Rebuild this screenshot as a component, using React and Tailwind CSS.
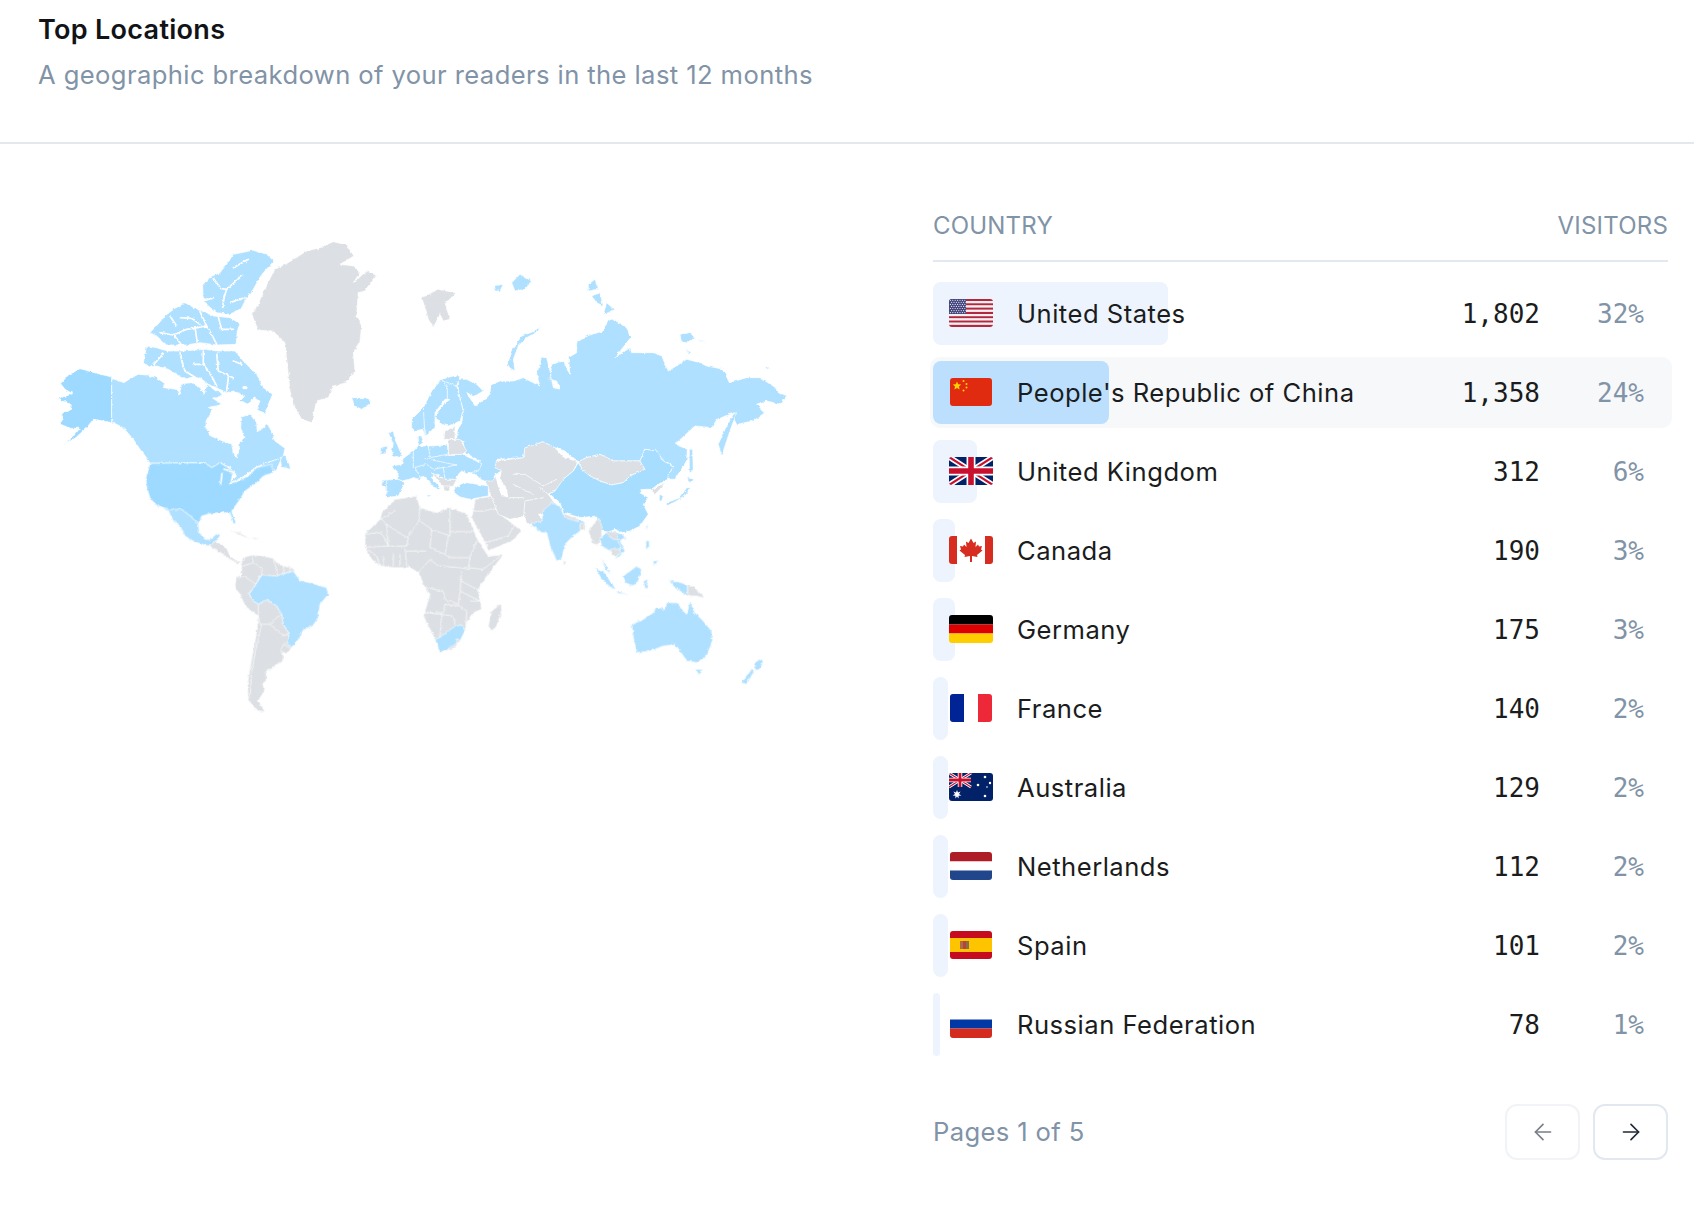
import React from "react";
import { ArrowLeft, ArrowRight } from "lucide-react";

const LIGHT = "#b0e0ff";
const MID = "#a7deff";
const DARK = "#9edaff";
const GRAY = "#dcdfe3";

function Z({ x, y, children }) {
  return <g transform={`translate(${x} ${y}) scale(0.3333)`}>{children}</g>;
}
function P({ f, pts }) {
  return pts.map((p, i) => (
    <polygon key={i} points={p} fill={f} stroke="#fff" strokeWidth="2" strokeLinejoin="round" />
  ));
}
function L({ d, w = 2.2 }) {
  return <path d={d} fill="none" stroke="#fff" strokeWidth={w} strokeLinejoin="round" strokeLinecap="round" />;
}

function WorldMap() {
  return (
    <svg viewBox="50 230 750 490" className="w-[750px] h-[490px] ml-[50px] mt-[87px] block">
      <defs>
        <filter id="coast" x="-2%" y="-2%" width="104%" height="104%">
          <feTurbulence type="fractalNoise" baseFrequency="0.28" numOctaves="2" seed="4" result="n" />
          <feDisplacementMap in="SourceGraphic" in2="n" scale="3" xChannelSelector="R" yChannelSelector="G" />
        </filter>
      </defs>
      <g filter="url(#coast)">
        {/* North America, Greenland, Iceland */}
        <Z x={0} y={200}>
          <P f={GRAY} pts={["1000,122 1040,132 1062,165 1020,190 1060,195 1080,215 1060,245 1100,210 1128,222 1095,270 1075,275 1070,345 1085,375 1080,420 1060,455 1065,510 1040,545 1000,555 985,590 950,600 935,665 905,655 885,620 870,570 862,490 855,425 820,390 775,388 755,340 775,310 790,270 825,205 865,185 920,150 960,140"]} />
          <P f={DARK} pts={["335,528 290,517 240,503 205,522 182,548 195,565 218,578 198,585 172,593 195,603 215,612 210,628 185,640 186,660 178,668 210,682 240,682 215,712 190,732 225,712 260,680 280,655 300,658 335,665"]} />
          <P f={LIGHT} pts={[
            "335,532 372,545 395,530 415,520 440,522 470,530 495,548 490,560 530,565 538,582 545,548 575,545 600,560 612,578 622,550 650,572 665,572 660,590 636,590 665,610 625,620 638,625 618,660 618,680 632,705 680,725 695,728 700,760 712,770 718,740 718,725 732,710 722,680 725,648 750,640 770,665 772,695 800,672 806,672 825,720 855,742 850,765 835,775 800,785 765,800 740,820 700,850 690,845 710,825 700,815 690,800 660,785 635,800 615,785 450,787 440,770 420,745 400,715 370,680 340,665 335,665",
            "840,770 855,762 868,790 872,805 845,798",
            "745,825 790,790 845,770 835,795 815,815 790,825 760,830",
            "608,255 630,228 660,215 680,190 700,160 760,148 800,160 822,180 790,215 778,232 760,265 740,290 725,320 690,340 650,335 625,315 610,295",
            "450,395 478,365 495,345 525,322 555,305 590,325 620,335 640,345 690,350 720,368 712,390 708,430 650,432 600,425 560,432 500,432 470,405",
            "430,485 440,435 470,440 500,450 550,450 615,445 650,450 705,450 730,480 770,520 790,560 818,580 805,610 795,640 770,625 780,600 760,590 745,610 720,600 735,585 700,570 680,575 650,560 625,550 600,530 575,530 545,530 505,505 470,495 445,498",
            "1055,590 1095,590 1112,595 1110,608 1085,625 1065,615",
          ]} />
          <L w={5} d="M640,232 L662,262 L680,265 L725,225 M680,265 L672,290 L668,320 M612,300 L640,290 M690,305 L735,290 M700,200 L745,175" />
          <L w={5} d="M480,395 L520,402 L560,385 L620,375 M540,350 L575,352 L600,370 M600,332 L620,375 L635,400 L650,430 M655,348 L665,385 L700,385 M520,400 L545,432 M585,378 L592,425 M510,345 L530,375" />
          <L w={5} d="M462,490 L490,458 M540,455 L548,490 L555,510 L590,532 M610,450 L610,490 L632,520 L650,555 M650,455 L655,510 L700,530 M580,490 L605,490 M685,530 L680,570 M700,480 L725,490" />
          <ellipse cx="735" cy="560" rx="8" ry="5" fill="#fff" />
        </Z>

        {/* Americas south of the 49th */}
        <Z x={130} y={470}>
          <P f={LIGHT} pts={[
            "95,108 120,115 155,115 175,130 205,158 208,185 225,205 240,205 258,190 272,188 265,205 250,215 240,225 222,222 190,210 165,195 150,165 130,150 115,120 105,115",
            "95,110 105,130 130,170 135,175 110,140",
          ]} />
          <P f={DARK} pts={["60,-23 225,-25 245,-10 270,-25 310,0 300,40 355,15 380,-10 425,-20 430,5 400,15 380,35 345,60 330,85 305,120 318,158 310,158 300,125 270,125 240,128 215,135 205,158 175,130 155,115 120,115 95,108 75,100 60,80 50,50 48,20"]} />
          <L d="M272 40 L276 8 M282 -6 L316 6 M300 38 L342 18" w={5} />
          <P f={GRAY} pts={[
            "240,225 255,210 265,215 290,232 300,255 320,270 335,272 325,278 300,265 280,250 255,235",
            "335,272 345,258 365,252 400,255 430,262 445,280 490,292 495,300 440,315 410,320 390,315 378,340 358,368 365,385 385,400 410,385 440,405 455,430 460,460 478,488 470,515 485,530 470,548 455,545 462,570 430,585 425,595 410,595 408,630 395,640 405,655 385,690 405,722 385,720 355,690 352,640 360,590 380,480 385,435 345,405 330,370 315,350 318,320 335,310",
            "452,540 462,518 482,535 470,548",
          ]} />
          <polygon points="300,178 330,183 360,205 325,190" fill="#eceef0" />
          <polygon points="365,198 385,203 375,206" fill="#eceef0" />
          <P f={LIGHT} pts={["358,368 378,340 395,312 440,315 490,300 510,328 540,335 590,350 595,370 570,400 565,440 550,462 515,480 510,500 485,530 470,515 478,488 460,460 455,430 440,405 410,385 385,400 365,385"]} />
          <L d="M318 320 L345 318 L380 340 M365 252 L370 275 L395 290 L395 312 M340 285 L370 275 M385 400 L385 435 L390 460 L420 460 L440 440 L455 430 M395 460 L380 520 L365 600 L360 680 M420 460 L460 495 L478 488 M440 295 L440 310 M460 285 L462 308 M480 290 L478 305 M430 265 L440 295" />
        </Z>

        {/* Africa and Arabia */}
        <Z x={360} y={490}>
          <P f={GRAY} pts={[
            "15,128 60,85 65,65 105,25 170,15 180,50 230,65 270,50 320,68 355,150 385,195 430,192 400,230 370,270 355,295 365,355 340,365 320,395 315,420 285,470 240,485 225,445 190,375 210,310 195,290 175,245 150,230 100,230 60,225 35,205 15,170",
            "340,60 345,25 395,15 415,65 460,100 485,120 455,150 385,180 375,155 335,80",
            "423,338 425,360 410,405 395,420 385,405 395,360",
          ]} />
          <P f={LIGHT} pts={["225,445 245,435 285,405 305,402 315,420 300,450 270,470 240,485"]} />
          <circle cx="292" cy="450" r="6" fill={GRAY} stroke="#fff" strokeWidth="2" />
          <L d="M60,85 L105,60 M180,50 L175,95 L140,140 L80,100 L65,85 M180,90 L215,115 L270,135 L270,55 M270,122 L340,122 M215,115 L210,170 L255,190 L265,135 M20,128 L65,125 L85,165 L20,168 M80,100 L85,165 L140,165 L145,140 M140,180 L200,180 M135,170 L140,225 M255,190 L270,200 L330,200 L350,150 M330,200 L325,230 L370,235 L420,195 M175,245 L210,205 L235,225 L300,230 L330,235 M200,290 L250,300 L255,325 L295,340 L300,300 L305,240 M300,268 L360,300 M300,300 L360,330 M195,290 L195,365 L250,365 L255,340 M195,365 L245,370 L240,440 M245,370 L280,375 L285,400 M255,340 L300,345 L320,360 L318,400 M330,330 L360,330 M15,170 L50,195 L60,225 M70,195 L70,225 M100,190 L100,225 M120,190 L120,225 M340,60 L370,60 L410,50 M375,155 L445,135 L460,105" />
        </Z>

        {/* Russia and Asia */}
        <Z x={400} y={230}>
          <P f={GRAY} pts={[
            "65,200 115,175 165,185 150,205 135,215 150,265 130,270 120,250 100,290 85,265 75,230",
            "285,690 370,680 375,650 430,632 465,650 490,678 532,692 520,720 490,745 495,765 460,780 445,790 470,825 445,845 415,850 440,880 380,880 375,855 330,865 295,850 275,800 265,770 255,750 285,745",
          ]} />
          <polygon points="285,730 305,720 300,745 320,770 325,800 305,795 295,770" fill="#fff" />
          <L d="M340,730 L375,730 L430,765 L470,745 M370,860 L375,810 L430,800 M330,800 L370,800 M340,760 L400,790 M420,770 L445,790" />
          <P f={LIGHT} pts={[
            "172,600 185,575 190,540 175,480 175,445 200,445 230,460 250,480 225,495 200,485 225,525 260,500 270,490 272,462 300,450 340,450 370,440 420,465 410,430 425,378 440,380 450,420 460,470 480,475 470,450 450,445 455,400 490,390 510,430 505,380 530,365 530,335 560,315 610,300 625,265 640,265 680,290 692,320 645,380 690,350 695,365 720,365 760,365 785,375 805,420 860,385 900,395 920,405 970,415 988,455 1040,440 1080,440 1120,465 1135,485 1160,495 1140,520 1100,510 1070,520 1095,545 1060,570 1010,580 1000,560 1005,545 950,565 940,590 885,585 825,640 862,655 860,690 825,745 800,745 820,705 790,690 770,660 735,655 720,690 640,690 600,670 560,680 535,692 495,660 465,650 430,632 375,650 370,680 290,685 285,710 305,720 285,730 280,750 250,750 205,715 240,690 195,665 190,635 170,625",
            "1000,550 1010,545 990,600 965,675 955,640 975,595",
            "868,655 878,655 880,720 868,725",
            "420,285 405,300 365,315 340,350 320,405 345,420 340,385 355,345 380,320 415,300",
            "280,165 310,160 300,180 285,180",
            "335,155 360,130 395,150 375,175 345,180",
            "565,160 585,145 595,175 565,180",
            "575,195 600,185 610,225 590,215",
            "610,250 620,215 642,235 625,245",
            "840,310 870,305 885,320 860,335 845,335",
            "895,325 920,335 900,330",
            "860,358 875,365 865,370",
            "1095,410 1115,408 1100,415",
            "860,740 885,745 870,755",
            "800,825 830,810 860,790 868,770 860,770 840,800 800,815",
          ]} />
          <P f={GRAY} pts={["535,692 560,680 600,670 640,690 720,690 735,715 690,735 670,755 635,762 600,750 570,735 545,715"]} />
          <P f={MID} pts={["465,780 490,745 520,720 535,695 545,715 570,735 600,750 635,762 670,755 690,735 735,715 720,690 735,655 770,660 790,690 820,705 800,745 775,760 755,775 725,775 720,785 745,800 730,820 745,850 720,885 690,900 670,905 645,895 625,905 600,895 590,855 540,860 490,845 480,815 450,790"]} />
          <P f={GRAY} pts={["755,775 795,755 780,775 765,790"]} />
          <P f={LIGHT} pts={["778,790 790,795 785,810 778,810"]} />
        </Z>

        {/* South and South-East Asia, Oceania */}
        <Z x={530} y={480}>
          <P f={LIGHT} pts={[
            "0,128 35,120 40,90 65,65 90,75 100,100 150,115 165,125 150,150 125,170 105,190 95,235 80,240 60,195 50,155 35,155",
            "210,175 225,155 250,150 275,175 270,205 240,210 215,195",
            "250,150 285,165 270,180 285,210 265,230 255,232 272,200",
            "215,230 235,265 245,280 225,265",
            "280,170 290,170 285,178",
            "348,178 358,180 358,200 347,205",
            "370,240 383,238 378,252 368,252",
            "347,135 354,133 350,148",
            "195,260 220,270 258,325 245,322 215,295",
            "258,330 300,340 265,338",
            "320,342 380,348 350,346",
            "280,285 320,255 335,265 325,300 310,315 285,305",
            "340,300 355,295 350,310 358,322 345,322",
            "415,295 430,302 445,302 473,312 473,345 450,330 430,315",
            "305,430 340,415 370,395 380,378 405,385 410,365 445,365 450,378 470,400 480,360 495,395 520,420 545,450 548,480 530,525 500,545 470,540 450,510 435,490 400,495 360,510 320,515 310,470",
            "497,565 515,565 508,583",
            "675,545 688,535 700,540 690,565 675,568",
            "632,605 665,565 672,572 650,610",
          ]} />
          <P f={GRAY} pts={[
            "100,97 145,115 145,122 105,110",
            "150,125 165,130 165,150 150,145",
            "175,150 205,110 215,135 215,165 205,190 190,190 180,165",
            "240,205 270,205 270,220 250,225",
            "225,155 250,150 270,175 250,175",
            "100,235 108,250 100,252",
            "473,310 495,320 525,352 500,345 473,345",
          ]} />
        </Z>

        {/* Europe */}
        <Z x={360} y={370}>
          <P f={LIGHT} pts={[
            "85,185 100,180 105,205 118,235 125,255 100,258 95,240 100,220",
            "62,230 80,225 78,248 60,250",
            "155,145 190,110 215,60 245,25 280,15 300,15 290,45 310,120 300,150 265,165 245,160 225,135 245,105 270,85 255,85 225,125 225,170 195,195 188,175 165,180 155,170",
            "175,195 185,195 190,215 175,225",
            "95,285 125,280 130,262 160,240 175,225 210,225 262,222 265,250 305,250 340,265 365,280 355,300 320,308 305,300 295,310 290,325 255,325 230,310 215,320 245,355 225,350 190,315 180,325 160,320 130,330 112,325 115,305",
            "65,328 115,325 135,335 115,375 80,380 75,345 65,345",
            "200,372 215,372 205,378",
            "285,350 320,335 385,345 385,375 330,385 300,378 283,365",
          ]} />
          <P f={GRAY} pts={[
            "215,305 255,325 290,325 280,345 255,350 240,335",
            "250,345 270,345 268,360 255,360",
            "265,225 265,205 300,205 320,240 305,250 265,250",
            "250,205 255,180 285,165 285,205 265,205",
          ]} />
          <L d="M190 110 L195 195 M245 25 L262 50 L262 85 M290 45 L250 30 M160 240 L160 290 M205 225 L210 260 L262 250 M195 262 L255 275 L290 282 M160 290 L200 280 L220 295 L290 282 M250 290 L255 325 M165 290 L180 320 M80 330 L80 378" />
        </Z>
      </g>
    </svg>
  );
}

const Clip = ({ id, w, children }) => (
  <svg width={w} height="28" viewBox={`0 0 ${w} 28`} className="block">
    <defs>
      <clipPath id={id}>
        <rect width={w} height="28" rx="3" />
      </clipPath>
    </defs>
    <g clipPath={`url(#${id})`}>{children}</g>
  </svg>
);

function UnionJack({ w, h }) {
  return (
    <g>
      <rect width={w} height={h} fill="#012169" />
      <path d={`M0 0L${w} ${h}M${w} 0L0 ${h}`} stroke="#fff" strokeWidth={h * 0.2} />
      <path d={`M0 0L${w} ${h}M${w} 0L0 ${h}`} stroke="#c8102e" strokeWidth={h * 0.08} />
      <path d={`M${w / 2} 0V${h}M0 ${h / 2}H${w}`} stroke="#fff" strokeWidth={h * 0.32} />
      <path d={`M${w / 2} 0V${h}M0 ${h / 2}H${w}`} stroke="#c8102e" strokeWidth={h * 0.2} />
    </g>
  );
}

function Flag({ c }) {
  if (c === "us") {
    const stripes = Array.from({ length: 13 }, (_, i) => i);
    const dots = [];
    for (let r = 0; r < 7; r++) for (let k = 0; k < 7; k++) dots.push([1.4 + k * 2.4 + (r % 2) * 1.2, 1.3 + r * 2.05]);
    return (
      <Clip id="us" w={44}>
        {stripes.map((i) => (
          <rect key={i} y={(i * 28) / 13} width="44" height={28 / 13} fill={i % 2 ? "#f3f0f2" : "#b5273f"} />
        ))}
        <rect width="17" height="15" fill="#46467f" />
        {dots.map(([x, y], i) => (
          <circle key={i} cx={x} cy={y} r="0.6" fill="#e8e8f0" />
        ))}
      </Clip>
    );
  }
  if (c === "cn") {
    return (
      <Clip id="cn" w={42}>
        <rect width="42" height="28" fill="#e02b10" />
        <polygon points="7,3.5 8.2,6.2 11.2,6.5 9,8.5 9.6,11.5 7,10 4.4,11.5 5,8.5 2.8,6.5 5.8,6.2" fill="#ffd200" />
        <circle cx="13.5" cy="3" r="1" fill="#ffd200" />
        <circle cx="16.5" cy="6" r="1" fill="#ffd200" />
        <circle cx="16.5" cy="9.5" r="1" fill="#ffd200" />
        <circle cx="13.5" cy="12.5" r="1" fill="#ffd200" />
      </Clip>
    );
  }
  if (c === "gb") {
    return (
      <Clip id="gb" w={44}>
        <UnionJack w={44} h={28} />
      </Clip>
    );
  }
  if (c === "ca") {
    return (
      <Clip id="ca" w={44}>
        <rect width="44" height="28" fill="#fff" />
        <rect width="8" height="28" fill="#d62d20" />
        <rect x="36" width="8" height="28" fill="#d62d20" />
        <polygon points="22,2.5 24.5,7 27,5.5 26.5,11 29,8.5 30,10.5 33,10 32,13.5 33.5,14.5 28,19 28.5,21 23,20 23,26 21,26 21,20 15.5,21 16,19 10.5,14.5 12,13.5 11,10 14,10.5 15,8.5 17.5,11 17,5.5 19.5,7" fill="#d62d20" />
      </Clip>
    );
  }
  if (c === "de") {
    return (
      <Clip id="de" w={44}>
        <rect width="44" height="9.5" fill="#000" />
        <rect y="9.5" width="44" height="9" fill="#dd0000" />
        <rect y="18.5" width="44" height="9.5" fill="#ffce00" />
      </Clip>
    );
  }
  if (c === "fr") {
    return (
      <Clip id="fr" w={42}>
        <rect width="14" height="28" fill="#002395" />
        <rect x="14" width="14" height="28" fill="#fff" />
        <rect x="28" width="14" height="28" fill="#ed2939" />
      </Clip>
    );
  }
  if (c === "au") {
    return (
      <Clip id="au" w={44}>
        <rect width="44" height="28" fill="#012169" />
        <UnionJack w={22} h={14} />
        <polygon points="8,17 9,19.6 11.6,18.6 10,21 12.4,22.4 9.6,22.8 9.6,25.6 8,23.4 6.4,25.6 6.4,22.8 3.6,22.4 6,21 4.4,18.6 7,19.6" fill="#fff" />
        <circle cx="36" cy="4" r="1.3" fill="#fff" />
        <circle cx="29" cy="12" r="1.3" fill="#fff" />
        <circle cx="41" cy="10" r="1.2" fill="#fff" />
        <circle cx="38" cy="14" r="0.8" fill="#fff" />
        <circle cx="36" cy="23" r="1.3" fill="#fff" />
      </Clip>
    );
  }
  if (c === "nl") {
    return (
      <Clip id="nl" w={42}>
        <rect width="42" height="9.5" fill="#ae1c28" />
        <rect y="9.5" width="42" height="9" fill="#fff" />
        <rect y="18.5" width="42" height="9.5" fill="#21468b" />
      </Clip>
    );
  }
  if (c === "es") {
    return (
      <Clip id="es" w={42}>
        <rect width="42" height="28" fill="#c60b1e" />
        <rect y="7" width="42" height="14" fill="#ffc400" />
        <rect x="10" y="10" width="3" height="8" fill="#ad6b47" />
        <rect x="13" y="10" width="3" height="8" fill="#b5453b" />
        <rect x="16" y="10" width="3" height="8" fill="#8a6d4a" />
      </Clip>
    );
  }
  return (
    <Clip id="ru" w={42}>
      <rect width="42" height="9.5" fill="#fff" />
      <rect y="9.5" width="42" height="9" fill="#0039a6" />
      <rect y="18.5" width="42" height="9.5" fill="#d52b1e" />
    </Clip>
  );
}

const rows = [
  { c: "us", name: "United States", n: "1,802", p: "32%", bar: "w-[235px]" },
  { c: "cn", name: "People's Republic of China", n: "1,358", p: "24%", bar: "w-[176px]", hi: true },
  { c: "gb", name: "United Kingdom", n: "312", p: "6%", bar: "w-[44px]" },
  { c: "ca", name: "Canada", n: "190", p: "3%", bar: "w-[22px]" },
  { c: "de", name: "Germany", n: "175", p: "3%", bar: "w-[22px]" },
  { c: "fr", name: "France", n: "140", p: "2%", bar: "w-[15px]" },
  { c: "au", name: "Australia", n: "129", p: "2%", bar: "w-[15px]" },
  { c: "nl", name: "Netherlands", n: "112", p: "2%", bar: "w-[15px]" },
  { c: "es", name: "Spain", n: "101", p: "2%", bar: "w-[15px]" },
  { c: "ru", name: "Russian Federation", n: "78", p: "1%", bar: "w-[7px]" },
];

function Row({ r }) {
  return (
    <div className="relative h-[63px] mb-4 flex items-center">
      {r.hi && <div className="absolute -left-[3px] -right-1 -top-1 -bottom-1 rounded-[10px] bg-[#f7f8fa]" />}
      <div className={`absolute left-0 top-0 bottom-0 rounded-lg ${r.bar} ${r.hi ? "bg-[#bbdffd]" : "bg-[#edf4fd]"}`} />
      <div className="relative w-[84px] pl-4">
        <div className="w-[44px] flex justify-center -mt-[1px]">
          <Flag c={r.c} />
        </div>
      </div>
      <div className="relative flex-1 text-[#1a1c20] text-[25.6px] tracking-[0.5px] leading-none">{r.name}</div>
      <div className="relative text-[#1a1c20] text-[26px] leading-none font-['DejaVu_Sans_Mono',monospace]">{r.n}</div>
      <div className="relative w-[104px] mr-6 text-right text-[#8193a6] text-[26px] leading-none font-['DejaVu_Sans_Mono',monospace]">{r.p}</div>
    </div>
  );
}

export default function App() {
  return (
    <div className="w-[1694px] h-[1228px] bg-white font-['Inter',sans-serif] overflow-hidden">
      <div className="h-[144px] border-b-2 border-[#e4e7eb] pl-[38px] pt-[12px]">
        <div className="text-[27px] leading-[36px] font-semibold tracking-[0.3px] text-[#111317]">Top Locations</div>
        <div className="mt-[9px] text-[25.6px] leading-[36px] tracking-[0.4px] text-[#8193a6]">A geographic breakdown of your readers in the last 12 months</div>
      </div>
      <div className="flex">
        <div className="w-[933px] shrink-0">
          <WorldMap />
        </div>
        <div className="w-[735px] shrink-0 pt-[64px]">
          <div className="flex justify-between items-center h-[54px] border-b-2 border-[#e2e8f0] pb-[17px] text-[24px] tracking-[0.2px] leading-none text-[#8193a6]">
            <span>COUNTRY</span>
            <span>VISITORS</span>
          </div>
          <div className="pt-[20px]">
            {rows.map((r) => (
              <Row key={r.c} r={r} />
            ))}
          </div>
          <div className="flex items-center justify-between pt-[32px]">
            <span className="text-[25.6px] tracking-[0.36px] leading-none text-[#8193a6]">Pages 1 of 5</span>
            <div className="flex gap-[13px]">
              <button className="w-[75px] h-[56px] rounded-xl border-2 border-[#e8ecf1] flex items-center justify-center opacity-60">
                <ArrowLeft size={26} strokeWidth={1.5} color="#1f2937" />
              </button>
              <button className="w-[75px] h-[56px] rounded-xl border-2 border-[#e2e8f0] flex items-center justify-center">
                <ArrowRight size={26} strokeWidth={1.5} color="#1f2937" />
              </button>
            </div>
          </div>
        </div>
      </div>
    </div>
  );
}
